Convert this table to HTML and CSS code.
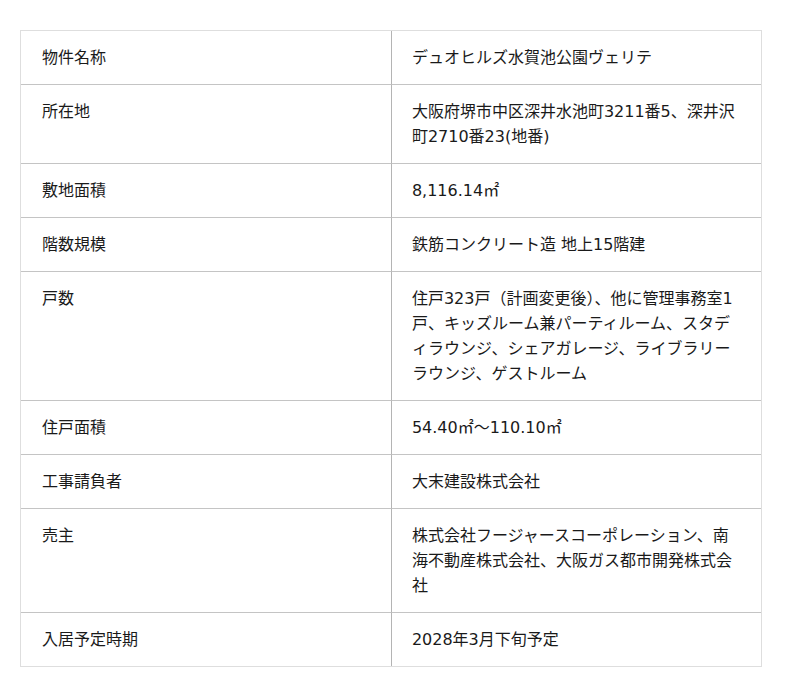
FILE: index.html
```html
<!DOCTYPE html>
<html lang="ja">
<head>
<meta charset="utf-8">
<link rel="stylesheet" href="styles.css">
</head>
<body>
<table class="spec">
  <tr><th>物件名称</th><td>デュオヒルズ水賀池公園ヴェリテ</td></tr>
  <tr><th>所在地</th><td>大阪府堺市中区深井水池町3211番5、深井沢町2710番23(地番)</td></tr>
  <tr><th>敷地面積</th><td>8,116.14㎡</td></tr>
  <tr><th>階数規模</th><td>鉄筋コンクリート造 地上15階建</td></tr>
  <tr><th>戸数</th><td>住戸323戸（計画変更後）、他に管理事務室1戸、キッズルーム兼パーティルーム、スタディラウンジ、シェアガレージ、ライブラリーラウンジ、ゲストルーム</td></tr>
  <tr><th>住戸面積</th><td>54.40㎡～110.10㎡</td></tr>
  <tr><th>工事請負者</th><td>大末建設株式会社</td></tr>
  <tr><th>売主</th><td>株式会社フージャースコーポレーション、南海不動産株式会社、大阪ガス都市開発株式会社</td></tr>
  <tr><th>入居予定時期</th><td>2028年3月下旬予定</td></tr>
</table>
</body>
</html>
```
FILE: styles.css
```css
html, body {
  margin: 0;
  background: #fff;
}
body {
  padding: 30px 38px 0 20px;
  font-family: "DejaVu Sans", "Noto Sans CJK JP", sans-serif;
  color: #1a1a1a;
}
.spec {
  width: 742px;
  border-collapse: separate;
  border-spacing: 0;
  border: 1px solid #dedede;
  table-layout: fixed;
}
.spec th, .spec td {
  font-size: 16px;
  font-weight: normal;
  line-height: 25px;
  text-align: left;
  vertical-align: top;
  padding: 14px 20px 14px 21px;
  border-top: 1px solid #c4c4c4;
  width: 50%;
}
.spec tr:first-child th, .spec tr:first-child td {
  border-top: none;
}
.spec th {
  border-right: 1px solid #b4b4b4;
  padding-left: 21px;
}
.spec td {
  padding-left: 20px;
}
```
